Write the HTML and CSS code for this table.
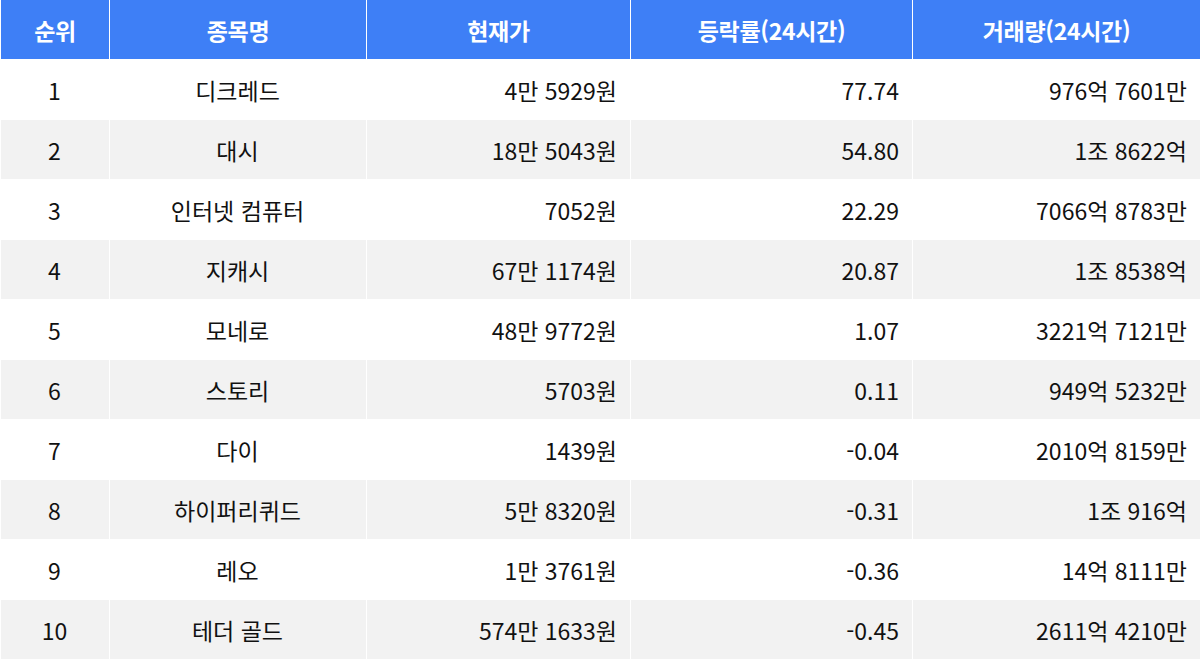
FILE: index.html
```html
<!DOCTYPE html>
<html lang="ko">
<head>
<meta charset="utf-8">
<link rel="stylesheet" href="styles.css">
</head>
<body>
<table class="rank">
  <colgroup>
    <col class="c1"><col class="c2"><col class="c3"><col class="c4"><col class="c5">
  </colgroup>
  <thead>
    <tr><th>순위</th><th>종목명</th><th>현재가</th><th>등락률(24시간)</th><th>거래량(24시간)</th></tr>
  </thead>
  <tbody>
    <tr><td class="ctr">1</td><td class="ctr">디크레드</td><td class="num">4만 5929원</td><td class="num">77.74</td><td class="num">976억 7601만</td></tr>
    <tr><td class="ctr">2</td><td class="ctr">대시</td><td class="num">18만 5043원</td><td class="num">54.80</td><td class="num">1조 8622억</td></tr>
    <tr><td class="ctr">3</td><td class="ctr">인터넷 컴퓨터</td><td class="num">7052원</td><td class="num">22.29</td><td class="num">7066억 8783만</td></tr>
    <tr><td class="ctr">4</td><td class="ctr">지캐시</td><td class="num">67만 1174원</td><td class="num">20.87</td><td class="num">1조 8538억</td></tr>
    <tr><td class="ctr">5</td><td class="ctr">모네로</td><td class="num">48만 9772원</td><td class="num">1.07</td><td class="num">3221억 7121만</td></tr>
    <tr><td class="ctr">6</td><td class="ctr">스토리</td><td class="num">5703원</td><td class="num">0.11</td><td class="num">949억 5232만</td></tr>
    <tr><td class="ctr">7</td><td class="ctr">다이</td><td class="num">1439원</td><td class="num">-0.04</td><td class="num">2010억 8159만</td></tr>
    <tr><td class="ctr">8</td><td class="ctr">하이퍼리퀴드</td><td class="num">5만 8320원</td><td class="num">-0.31</td><td class="num">1조 916억</td></tr>
    <tr><td class="ctr">9</td><td class="ctr">레오</td><td class="num">1만 3761원</td><td class="num">-0.36</td><td class="num">14억 8111만</td></tr>
    <tr><td class="ctr">10</td><td class="ctr">테더 골드</td><td class="num">574만 1633원</td><td class="num">-0.45</td><td class="num">2611억 4210만</td></tr>
  </tbody>
</table>
</body>
</html>
```

FILE: styles.css
```css
html, body {
  margin: 0;
  padding: 0;
  background: #ffffff;
}
body {
  font-family: "Noto Sans CJK KR", "Noto Sans", sans-serif;
  color: #111111;
}
.rank {
  width: 1201px;
  border-collapse: separate;
  border-spacing: 1px;
  margin: -1px 0 0 0;
  table-layout: fixed;
}
.c1 { width: 108px; }
.c2 { width: 256px; }
.c3 { width: 263px; }
.c4 { width: 281px; }
.c5 { width: 287px; }
.rank th {
  height: 59px;
  padding: 0;
  background: #3e7ff6;
  color: #ffffff;
  font-size: 23px;
  font-weight: 700;
  text-align: center;
  letter-spacing: -0.3px;
}
.rank td {
  height: 59px;
  padding: 0 13px 0 12px;
  font-size: 23px;
  font-weight: 400;
  white-space: nowrap;
}
.rank tbody tr:nth-child(even) td {
  background: #f2f2f2;
}
.ctr { text-align: center; }
.num { text-align: right; }
```
